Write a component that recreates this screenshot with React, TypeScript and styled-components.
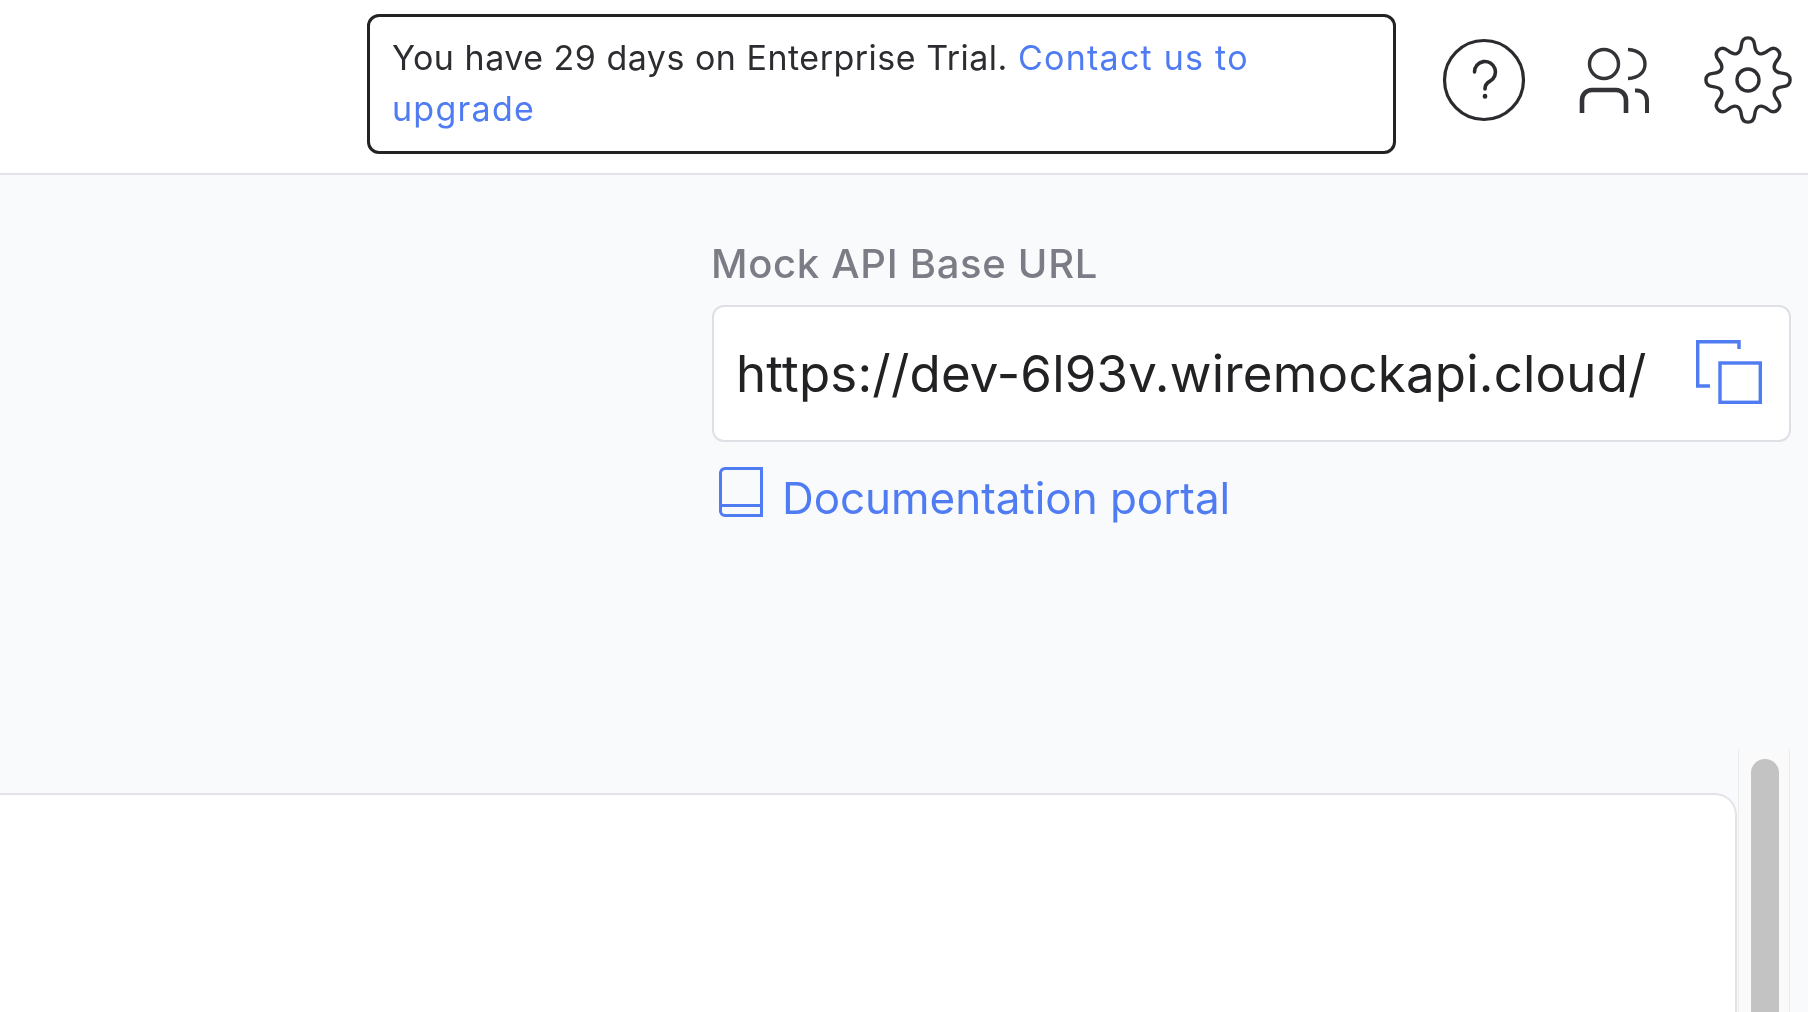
import { createGlobalStyle, styled } from 'styled-components';

const GlobalStyle = createGlobalStyle`
  html, body {
    margin: 0;
    padding: 0;
    background: #f9fafc;
  }
  * {
    box-sizing: border-box;
  }
`;

const BLUE = '#4f7bf3';

// 8 rounded teeth: a flat tip and a flat valley per tooth, smoothed through the midpoints
const gearPath = (() => {
  const pts: [number, number][] = [];
  const step = Math.PI / 4;
  const spread = (8 * Math.PI) / 180;
  const polar = (a: number, r: number): [number, number] => [44 + r * Math.cos(a), 44 + r * Math.sin(a)];
  for (let i = 0; i < 8; i++) {
    const tip = i * step - Math.PI / 2;
    const valley = tip + step / 2;
    pts.push(polar(tip - spread, 42.5), polar(tip + spread, 42.5), polar(valley - spread, 29), polar(valley + spread, 29));
  }
  const mid = (a: [number, number], b: [number, number]) => [(a[0] + b[0]) / 2, (a[1] + b[1]) / 2];
  const start = mid(pts[pts.length - 1], pts[0]);
  let d = `M${start[0].toFixed(2)} ${start[1].toFixed(2)}`;
  pts.forEach((p, i) => {
    const m = mid(p, pts[(i + 1) % pts.length]);
    d += ` Q${p[0].toFixed(2)} ${p[1].toFixed(2)} ${m[0].toFixed(2)} ${m[1].toFixed(2)}`;
  });
  return d + ' Z';
})();

const App = () => (
  <Page>
    <GlobalStyle />
    <Header>
      <TrialBanner>
        <BannerText>You have 29 days on Enterprise Trial. </BannerText>
        <BannerLink>Contact us to</BannerLink>
        <br />
        <BannerLink>upgrade</BannerLink>
      </TrialBanner>
      <HeaderIcons>
        <svg width="84" height="84" viewBox="0 0 84 84" fill="none" stroke="#2b2b2f" strokeWidth="3.2" strokeLinecap="round">
          <circle cx="42" cy="42" r="39.5" />
          <path d="M32.500 34a10.500 10.500 0 1 1 15.500 9.200c-3.400 1.900-5 3.800-5 7.800" strokeWidth="3.6" />
          <path d="M43 58v.5" strokeWidth="4.6" />
        </svg>
        <svg width="76" height="68" viewBox="0 0 76 68" fill="none" stroke="#333338" strokeWidth="3.4">
          <circle cx="27" cy="18" r="14.5" />
          <path d="M51 3.500C62 4 68 10 68 18S62 32 51 32.500" />
          <path d="M5 67V54a10 10 0 0 1 10-10h24a10 10 0 0 1 10 10v13" strokeWidth="4.6" />
          <path d="M58 44.500h2a10 10 0 0 1 10 10V67" strokeWidth="4" />
        </svg>
        <svg width="88" height="88" viewBox="0 0 88 88" fill="none" stroke="#2f2f33" strokeWidth="3.4">
          <path d={gearPath} />
          <circle cx="44" cy="44" r="11" />
        </svg>
      </HeaderIcons>
    </Header>
    <UrlSection>
      <UrlPanel>
        <UrlLabel>Mock API Base URL</UrlLabel>
        <UrlBox>
          <UrlText>https://dev-6l93v.wiremockapi.cloud/</UrlText>
          <CopyIcon width="66" height="64" viewBox="0 0 66 64" fill="none" stroke={BLUE} strokeWidth="3.4">
            <path d="M14 46H1.700V1.700H43V9" />
            <rect x="24" y="23" width="40.300" height="39.300" />
          </CopyIcon>
        </UrlBox>
        <DocLink>
          <svg width="44" height="50" viewBox="0 0 44 50" fill="none" stroke={BLUE} strokeWidth="3">
            <path d="M8 1.500h34.500v47H6a4.500 4.500 0 0 1-4.500-4.500V6A4.500 4.500 0 0 1 6 1.500z" />
            <path d="M1.500 38.500h41" />
          </svg>
          <DocText>Documentation portal</DocText>
        </DocLink>
      </UrlPanel>
    </UrlSection>
    <Workspace>
      <Card />
      <ScrollTrack>
        <ScrollThumb />
      </ScrollTrack>
    </Workspace>
  </Page>
);

export default App;

const Page = styled.div`
  width: 1808px;
  height: 1012px;
  overflow: hidden;
  display: flex;
  flex-direction: column;
  background: #f9fafc;
  font-family: Inter, 'Liberation Sans', sans-serif;
  filter: blur(0.6px);
`;

const Header = styled.header`
  height: 175px;
  flex: none;
  padding: 14px 0 0 367px;
  display: flex;
  align-items: flex-start;
  background: #fff;
  border-bottom: 2px solid #e2e3e8;
`;

const TrialBanner = styled.div`
  flex: none;
  width: 1029px;
  height: 140px;
  padding: 15px 100px 12px 22px;
  border: 3px solid #232326;
  border-radius: 12px;
  font-size: 34px;
  line-height: 51px;
`;

const BannerText = styled.span`
  color: #2d2d31;
  letter-spacing: 0.5px;
`;

const BannerLink = styled.span`
  color: ${BLUE};
  letter-spacing: 1.25px;
`;

const HeaderIcons = styled.div`
  height: 132px;
  margin-left: 46px;
  display: flex;
  align-items: center;
  gap: 51px;
`;

const UrlSection = styled.section`
  height: 574px;
  flex: none;
  display: flex;
  justify-content: flex-end;
  padding-right: 17px;
`;

const UrlPanel = styled.div`
  width: 1081px;
  display: flex;
  flex-direction: column;
`;

const UrlLabel = styled.div`
  margin: 59px 0 0 1px;
  color: #7c7c86;
  font-size: 40px;
  font-weight: 500;
  line-height: 60px;
  letter-spacing: 0.7px;
`;

const UrlBox = styled.div`
  height: 137px;
  margin: 11px 0 0 2px;
  padding: 0 27px 0 22px;
  display: flex;
  align-items: center;
  justify-content: space-between;
  background: #fff;
  border: 2px solid #dfe0e5;
  border-radius: 12px;
`;

const UrlText = styled.div`
  color: #222225;
  font-size: 51px;
  line-height: 64px;
  letter-spacing: 0.2px;
  white-space: nowrap;
`;

const CopyIcon = styled.svg`
  margin-bottom: 4px;
`;

const DocLink = styled.div`
  margin: 25px 0 0 9px;
  display: flex;
  align-items: flex-start;
  gap: 19px;
`;

const DocText = styled.div`
  padding-top: 3px;
  color: ${BLUE};
  font-size: 44px;
  line-height: 56px;
  letter-spacing: -0.05px;
`;

const Workspace = styled.section`
  flex: 1;
  display: flex;
  align-items: stretch;
  padding-right: 18px;
`;

const Card = styled.div`
  width: 1737px;
  margin-top: 44px;
  background: #fff;
  border-top: 2px solid #e2e3e8;
  border-right: 2px solid #e2e3e8;
  border-top-right-radius: 22px;
`;

const ScrollTrack = styled.div`
  flex: 1;
  margin-left: 1px;
  padding: 10px 10px 0 12px;
  background: #fafafa;
  border-left: 1px solid #ececec;
  border-right: 1px solid #ececec;
`;

const ScrollThumb = styled.div`
  height: 100%;
  background: #c3c3c3;
  border-radius: 15px 15px 0 0;
`;
